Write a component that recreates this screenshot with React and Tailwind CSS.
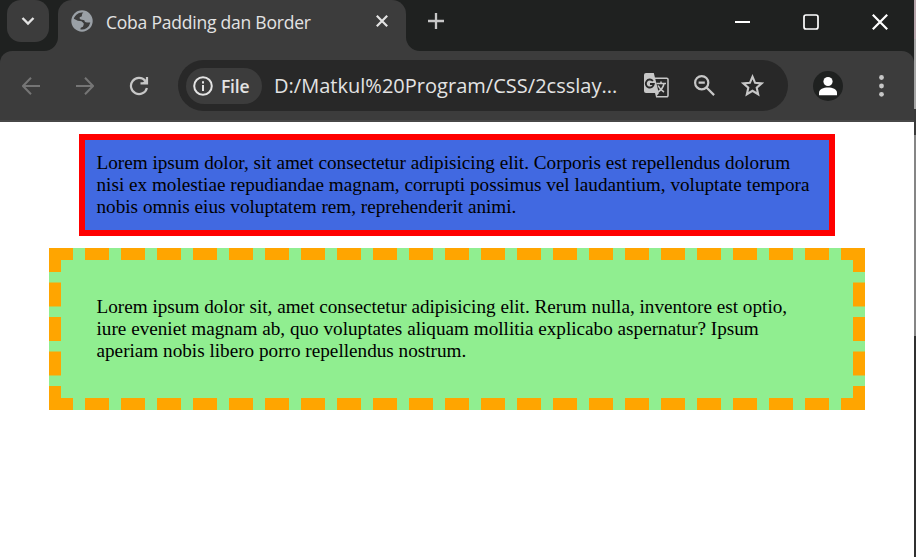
function TabStrip() {
  return (
    <header className="relative flex h-[51px] items-start bg-[#1f2120] text-[#e3e3e3]">
      <button className="ml-[7px] flex h-[42px] w-[42px] items-center justify-center rounded-[14px] bg-[#3c3c3c]" aria-label="Search tabs">
        <svg width="14" height="10" viewBox="0 0 14 10" fill="none" stroke="#e3e3e3" strokeWidth="2.4">
          <path d="M1.500 2l5.500 5.500L12.500 2" />
        </svg>
      </button>
      <div className="relative ml-[9px] flex h-[51px] w-[348px] rounded-t-[14px] bg-[#3c3c3c] pl-[13px]">
        <svg className="absolute -left-[14px] bottom-0" width="14" height="14" viewBox="0 0 14 14">
          <path d="M14 0v14H0A14 14 0 0 0 14 0z" fill="#3c3c3c" />
        </svg>
        <svg className="absolute -right-[14px] bottom-0" width="14" height="14" viewBox="0 0 14 14">
          <path d="M0 0v14h14A14 14 0 0 1 0 0z" fill="#3c3c3c" />
        </svg>
        <svg className="mt-[10px] shrink-0" width="22" height="22" viewBox="0 0 22 22">
          <circle cx="11" cy="11" r="10.700" fill="#9aa0a6" />
          <path d="M12.500 2.600C11.300 3.300 10.800 4.500 10.900 6.300L8.700 7.200C8.300 8.600 9.200 9.600 11 9.800L13.300 10.300C13.600 12 14.800 12.600 16.600 12.400L19.300 12.600A8.600 8.600 0 0 1 9.500 19.500L9.500 17.600C11.300 17.200 12.600 16.100 12.300 14.500C12 12.700 10.500 11.700 8.500 11.500L2.500 11.500A8.600 8.600 0 0 1 12.500 2.600z" fill="#3c3c3c" />
          <path d="M2.300 8.500L6.800 10.800L10.500 11.300L12.800 13.500L12 16.400L9.300 17.700L8.600 20.500L3.500 18L1 13z" fill="#9aa0a6" />
        </svg>
        <span className="ml-[13px] mt-[9px] whitespace-nowrap font-['Open_Sans','Noto_Sans',sans-serif] text-[17.500px] leading-[27px] tracking-[-0.220px]">Coba Padding dan Border</span>
        <svg className="absolute left-[318px] top-[15px]" width="12" height="12" viewBox="0 0 12 12" stroke="#e3e3e3" strokeWidth="2.200">
          <path d="M.8.800l10.400 10.400M11.200.8L.8 11.200" />
        </svg>
      </div>
      <svg className="ml-[22px] mt-[13px]" width="16" height="16" viewBox="0 0 16 16" stroke="#c7c7c7" strokeWidth="2.300">
        <path d="M8 0v16M0 8h16" />
      </svg>
      <div className="ml-auto mr-[26px] mt-[14px] flex items-center gap-[53px] text-white">
        <svg width="15" height="16" viewBox="0 0 15 16" stroke="currentColor" strokeWidth="2"><path d="M0 8h15" /></svg>
        <svg width="16" height="16" viewBox="0 0 16 16" fill="none" stroke="currentColor" strokeWidth="1.700"><rect x="1" y="1" width="14" height="14" rx="2" /></svg>
        <svg width="16" height="16" viewBox="0 0 16 16" stroke="currentColor" strokeWidth="2.200"><path d="M.8.800l14.400 14.400M15.200.8L.8 15.200" /></svg>
      </div>
    </header>
  );
}

function Toolbar() {
  return (
    <div className="bg-[#1f2120]">
      <nav className="flex h-[71px] items-center rounded-t-[12px] border-b-2 border-[#474747] bg-[#3c3c3c] text-[#c7c7c7]">
        <svg className="ml-[22px]" width="18" height="18" viewBox="0 0 18 18" fill="none" stroke="#757575" strokeWidth="2">
          <path d="M18 9H1.500M9 .8L1 9l8 8.200" />
        </svg>
        <svg className="ml-[36px]" width="18" height="18" viewBox="0 0 18 18" fill="none" stroke="#757575" strokeWidth="2">
          <path d="M0 9h16.500M9 .8L17 9l-8 8.200" />
        </svg>
        <svg className="ml-[35px]" width="20" height="20" viewBox="0 0 20 20" fill="none" stroke="currentColor" strokeWidth="2.200">
          <path d="M16.200 4.700A8.100 8.100 0 1 0 17.900 12M18 1v6.400h-6.500" />
          <path d="M13 7.500h6V1z" fill="currentColor" stroke="none" />
        </svg>
        <div className="ml-[29px] flex h-[51px] w-[610px] items-center rounded-full bg-[#282828] pl-2">
          <div className="flex h-[36px] w-[76px] shrink-0 items-center rounded-full bg-[#3c3c3c] pl-[7px]">
            <svg width="20" height="20" viewBox="0 0 20 20" fill="none" stroke="#e3e3e3" strokeWidth="2">
              <circle cx="10" cy="10" r="8.800" />
              <path d="M10 9v6M10 5.200v2.200" />
            </svg>
            <span className="ml-[8px] font-['Open_Sans','Noto_Sans',sans-serif] text-[17.500px] font-semibold leading-6 tracking-[-0.200px] text-[#e3e3e3]">File</span>
          </div>
          <span className="ml-[12px] w-[344px] shrink-0 whitespace-nowrap font-['Open_Sans','Noto_Sans',sans-serif] text-[20px] leading-[28px] tracking-[0.020px] text-[#e3e3e3]">D:/Matkul%20Program/CSS/2csslay...</span>
          <svg className="ml-[26px] shrink-0" width="25" height="25" viewBox="0 0 25 25">
            <path d="M11 5.300h11.800a1.200 1.200 0 0 1 1.200 1.200v16a1.200 1.200 0 0 1-1.200 1.200H12" fill="none" stroke="#c7c7c7" strokeWidth="1.500" />
            <path d="M2 0h7.800l5 20H2a2 2 0 0 1-2-2V2a2 2 0 0 1 2-2z" fill="#c7c7c7" />
            <path d="M11 20h4l-3 4z" fill="#c7c7c7" />
            <path d="M8.900 8A4 4 0 1 0 9.800 11H6" fill="none" stroke="#282828" strokeWidth="1.900" />
            <path d="M12.300 10.500h9.700M17 8.500v2M20 10.500c-.6 3.500-3 6.500-6 8.500M14 12.500c1.500 3 3.500 5 6 6.500" fill="none" stroke="#c7c7c7" strokeWidth="1.600" />
          </svg>
          <svg className="ml-[25px] shrink-0" width="21" height="21" viewBox="0 0 21 21" fill="none" stroke="currentColor" strokeWidth="2.200">
            <circle cx="7.700" cy="7.700" r="6.600" />
            <path d="M12.500 12.500l7.600 7.600M4.600 7.700h6.200" />
          </svg>
          <svg className="ml-[26px] shrink-0" width="23" height="23" viewBox="0 0 24 23" fill="none" stroke="currentColor" strokeWidth="2.200">
            <path d="M12 2.300l2.700 6.400 6.900.6-5.200 4.500 1.500 6.800-5.900-3.600-5.900 3.600 1.500-6.800-5.200-4.500 6.900-.6z" />
          </svg>
        </div>
        <svg className="ml-[25px]" width="30" height="30" viewBox="0 0 30 30">
          <circle cx="15" cy="15" r="15" fill="#1f2120" />
          <circle cx="15" cy="10.500" r="4.600" fill="white" />
          <path d="M6 24.200v-2.400c0-3.500 4.500-5.300 9-5.300s9 1.800 9 5.300v2.400z" fill="white" />
        </svg>
        <svg className="ml-[36px]" width="5" height="22" viewBox="0 0 5 22" fill="currentColor">
          <circle cx="2.500" cy="2.500" r="2.400" /><circle cx="2.500" cy="11" r="2.400" /><circle cx="2.500" cy="19.300" r="2.400" />
        </svg>
      </nav>
    </div>
  );
}

export default function App() {
  return (
    <div className="flex h-[557px] w-[916px] overflow-hidden bg-white">
      <div className="w-[914px] shrink-0">
        <TabStrip />
        <Toolbar />
        <main className="pt-3 font-['Liberation_Serif',serif] text-[19.200px] leading-[22px] text-black">
          <p className="ml-[79px] w-[756px] border-[6px] border-[#ff0000] bg-[#4169e1] py-3 pl-[11.500px] pr-3">
            Lorem ipsum dolor, sit amet consectetur adipisicing elit. Corporis est repellendus dolorum nisi ex molestiae repudiandae magnam, corrupti possimus vel laudantium, voluptate tempora nobis omnis eius voluptatem rem, reprehenderit animi.
          </p>
          <p className="ml-[49px] mt-3 w-[816px] border-[12px] border-dashed border-[#ffa500] bg-[#90ee90] py-9 pl-[35.500px] pr-9">
            Lorem ipsum dolor sit, amet consectetur adipisicing elit. Rerum nulla, inventore est optio, iure eveniet magnam ab, quo voluptates aliquam mollitia explicabo aspernatur? Ipsum aperiam nobis libero porro repellendus nostrum.
          </p>
        </main>
      </div>
      <aside className="w-[2px] shrink-0">
        <div className="h-[39px] bg-[#b5a4aa]" />
        <div className="h-[70px] bg-[#a5a5a5]" />
        <div className="h-[26px] bg-[#3a3a3a]" />
        <div className="h-[201px] bg-[#858585]" />
        <div className="h-[221px] bg-[#303030]" />
      </aside>
    </div>
  );
}
